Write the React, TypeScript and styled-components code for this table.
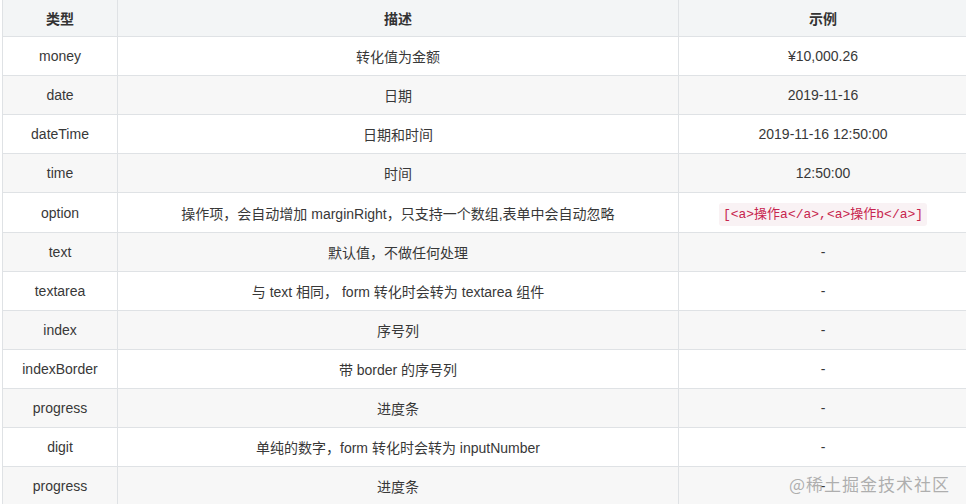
import React from "react";
import styled, { createGlobalStyle } from "styled-components";

interface Row {
  type: string;
  desc: string;
  example: string;
  code?: boolean;
}

const rows: Row[] = [
  { type: "money", desc: "转化值为金额", example: "¥10,000.26" },
  { type: "date", desc: "日期", example: "2019-11-16" },
  { type: "dateTime", desc: "日期和时间", example: "2019-11-16 12:50:00" },
  { type: "time", desc: "时间", example: "12:50:00" },
  {
    type: "option",
    desc: "操作项，会自动增加 marginRight，只支持一个数组,表单中会自动忽略",
    example: "[<a>操作a</a>,<a>操作b</a>]",
    code: true,
  },
  { type: "text", desc: "默认值，不做任何处理", example: "-" },
  { type: "textarea", desc: "与 text 相同， form 转化时会转为 textarea 组件", example: "-" },
  { type: "index", desc: "序号列", example: "-" },
  { type: "indexBorder", desc: "带 border 的序号列", example: "-" },
  { type: "progress", desc: "进度条", example: "-" },
  { type: "digit", desc: "单纯的数字，form 转化时会转为 inputNumber", example: "-" },
  { type: "progress", desc: "进度条", example: "-" },
];

const GlobalStyle = createGlobalStyle`
  html, body {
    margin: 0;
    padding: 0;
    background: #ffffff;
  }
  body {
    font-family: "Liberation Sans", "Noto Sans CJK SC", sans-serif;
    color: #333333;
    overflow: hidden;
  }
`;

const Page = styled.div`
  position: relative;
  width: 966px;
  height: 504px;
  padding-left: 2px;
  box-sizing: border-box;
  overflow: hidden;
`;

const Table = styled.table`
  border-collapse: collapse;
  width: 962px;
  table-layout: fixed;
  font-size: 14px;
`;

const HeadCell = styled.th<{ width: number }>`
  width: ${(p) => p.width}px;
  height: 36px;
  padding: 0;
  background: #f3f5f6;
  border: 1px solid #dfe2e5;
  border-top: none;
  font-weight: bold;
  text-align: center;
  color: #333333;
`;

const BodyRow = styled.tr<{ striped: boolean }>`
  background: ${(p) => (p.striped ? "#f7f7f7" : "#ffffff")};
`;

const Cell = styled.td<{ tall?: boolean }>`
  height: ${(p) => (p.tall ? 39 : 38)}px;
  padding: 0 8px;
  border: 1px solid #dfe2e5;
  text-align: center;
  color: #383838;
  white-space: nowrap;
`;

const Code = styled.code`
  font-family: "Liberation Mono", "Noto Sans CJK SC", monospace;
  font-size: 13px;
  color: #c7254e;
  background: #f9f2f4;
  padding: 4px 4px;
  border-radius: 3px;
`;

const Watermark = styled.div`
  position: absolute;
  right: 16px;
  bottom: 8px;
  font-size: 17px;
  letter-spacing: 1px;
  color: rgba(150, 150, 150, 0.75);
  font-family: "Noto Sans CJK SC", sans-serif;
  pointer-events: none;
`;

const App: React.FC = () => {
  return (
    <Page>
      <GlobalStyle />
      <Table>
        <thead>
          <tr>
            <HeadCell width={114}>类型</HeadCell>
            <HeadCell width={560}>描述</HeadCell>
            <HeadCell width={288}>示例</HeadCell>
          </tr>
        </thead>
        <tbody>
          {rows.map((row, i) => (
            <BodyRow key={i} striped={i % 2 === 1}>
              <Cell tall={row.code}>{row.type}</Cell>
              <Cell tall={row.code}>{row.desc}</Cell>
              <Cell tall={row.code}>
                {row.code ? <Code>{row.example}</Code> : row.example}
              </Cell>
            </BodyRow>
          ))}
        </tbody>
      </Table>
      <Watermark>@稀土掘金技术社区</Watermark>
    </Page>
  );
};

export default App;
